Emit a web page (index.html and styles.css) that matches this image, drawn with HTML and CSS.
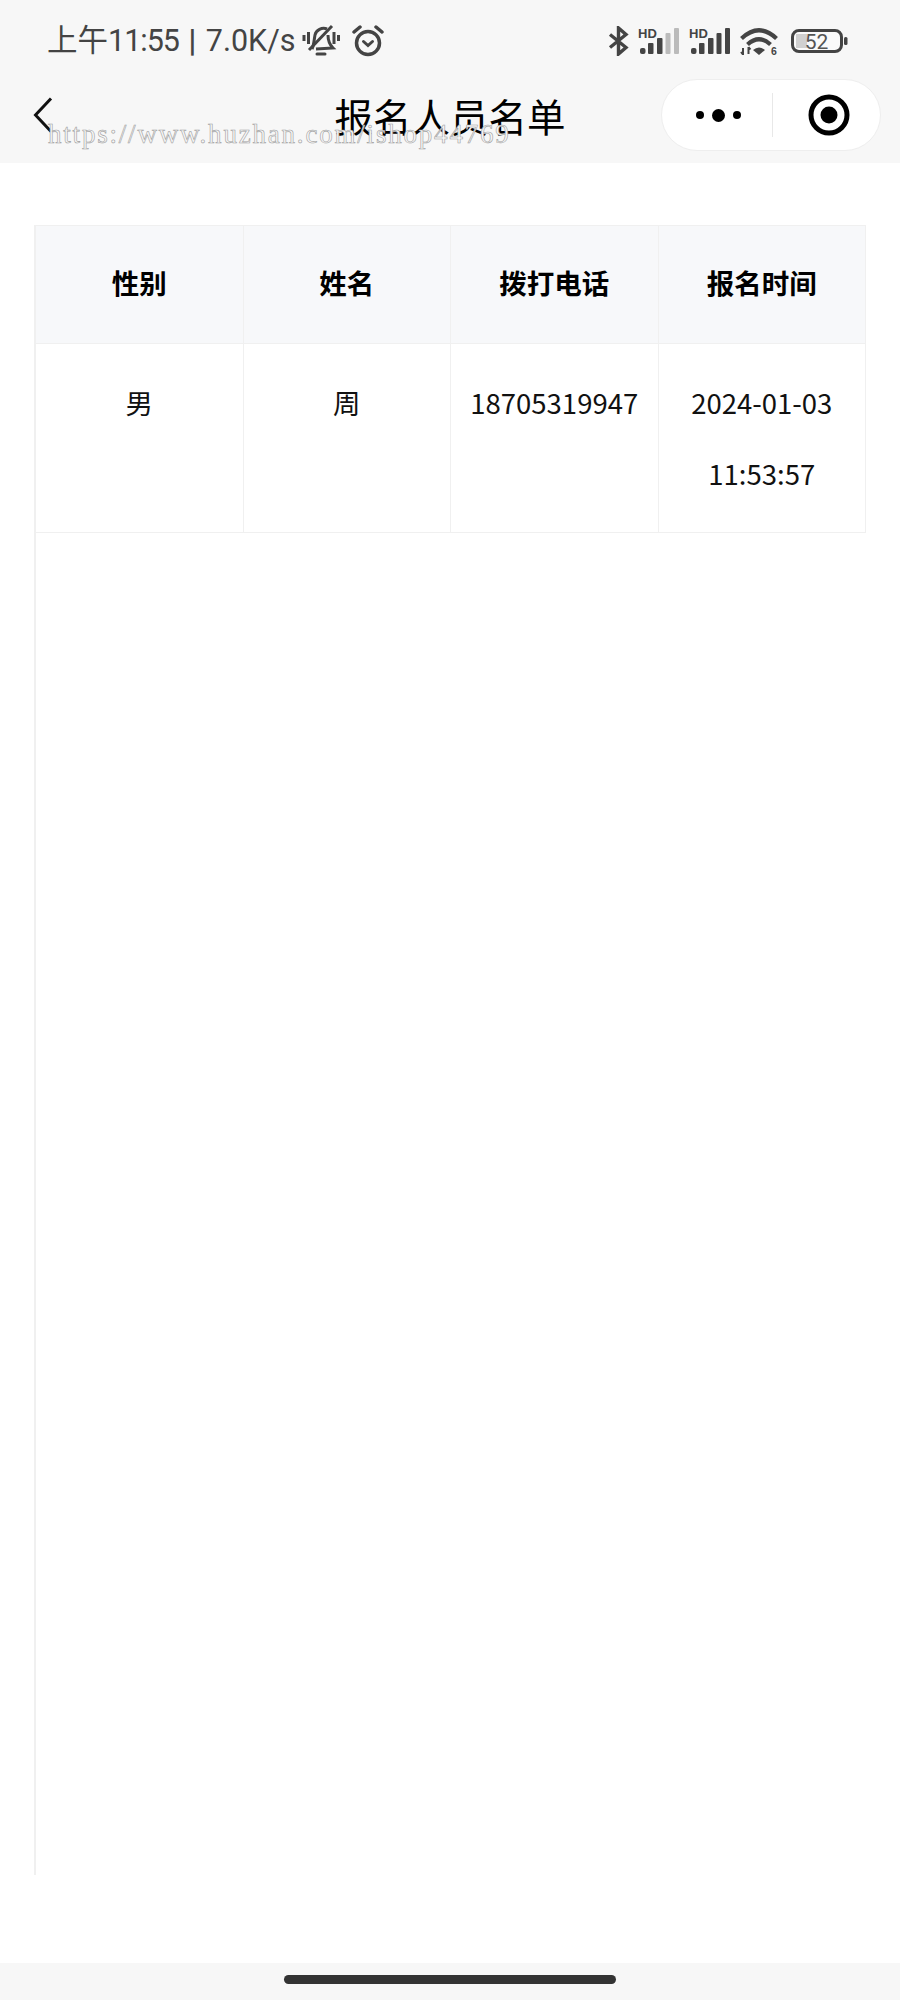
FILE: index.html
```html
<!DOCTYPE html>
<html lang="zh-CN">
<head>
<meta charset="utf-8">
<title>报名人员名单</title>
<link rel="stylesheet" href="styles.css">
</head>
<body>
<div class="page">
  <header class="top">
    <div class="status">
      <span class="clock">上午<span class="time">11:55</span> <b class="bar">|</b> 7.0K/s</span>
      <svg class="ic-bell" viewBox="0 0 38 34" fill="none" stroke="#444" stroke-width="3">
        <path d="M2 11v6M6.500 8v12M32 8v12M36.500 11v6"/>
        <path d="M10 25c2-4 2-9 3-14 1-5 7-8 12-6M26 11c0 5 1 9 5 13l-17 1"/>
        <path d="M15 30h8" stroke-linecap="round"/>
        <path d="M7 26 30 2"/>
      </svg>
      <svg class="ic-alarm" viewBox="0 0 32 32" fill="none" stroke="#444" stroke-width="3.500" stroke-linecap="round">
        <circle cx="16" cy="18" r="11.500"/>
        <path d="M2 7l6-5M24 2l6 5"/>
        <path d="M11.500 16.500 16 20.500l4.500-4" stroke-width="3"/>
      </svg>
      <div class="sys">
        <svg class="ic-bt" viewBox="0 0 21 30" fill="none" stroke="#444" stroke-width="3.400">
          <path d="M2 8.500 18 21.500 10.500 28V2L18 8.500 2 21.500"/>
        </svg>
        <svg class="ic-sig" viewBox="0 -3 42 29" fill="#444">
          <text x="0" y="10" class="hd">HD</text>
          <rect x="2" y="20" width="5.500" height="6" rx="2"/>
          <rect x="10" y="15" width="5.500" height="11" rx="1"/>
          <rect x="19" y="10" width="5.500" height="16" rx="1"/>
          <rect x="27.500" y="5" width="5" height="21" rx="1" fill="#bbb"/>
          <rect x="36" y="0" width="5" height="26" rx="1" fill="#bbb"/>
        </svg>
        <svg class="ic-sig" viewBox="0 -3 42 29" fill="#444">
          <text x="0" y="10" class="hd">HD</text>
          <rect x="2" y="20" width="5.500" height="6" rx="2"/>
          <rect x="10" y="15" width="5.500" height="11" rx="1"/>
          <rect x="19" y="10" width="5.500" height="16" rx="1"/>
          <rect x="27.500" y="5" width="5" height="21" rx="1"/>
          <rect x="36" y="0" width="5" height="26" rx="1"/>
        </svg>
        <svg class="ic-wifi" viewBox="0 0 38 28" fill="none" stroke="#444" stroke-width="4.200">
          <path d="M1.500 11.500Q19-5 36.500 11.500"/>
          <path d="M7.500 17.500Q19 7 30.500 17.500"/>
          <path d="M13 23Q19 18 25 23L19 28Z" fill="#444" stroke="none"/>
          <path d="M3 21v7M8.500 20v7M1 25l2 2.500M8.500 20l2 2.500" stroke-width="2"/>
          <text x="31" y="27.500" class="six">6</text>
        </svg>
        <svg class="ic-batt" viewBox="0 0 57 24">
          <rect x="1.500" y="1.500" width="49" height="21" rx="6.500" fill="#fafafa" stroke="#444" stroke-width="3"/>
          <rect x="5" y="5" width="11" height="14" fill="#d0d0d0"/>
          <text x="25.500" y="19.500" class="lvl">52</text>
          <rect x="53" y="8" width="3.500" height="8" rx="1.500" fill="#444"/>
        </svg>
      </div>
    </div>
    <nav class="nav">
      <svg class="back" viewBox="0 0 20 36" fill="none" stroke="#111" stroke-width="3"><path d="M18 1.500 2.500 18 18 34.500"/></svg>
      <h1 class="title">报名人员名单</h1>
      <div class="capsule">
        <span class="more">
          <i class="dot"></i><i class="dot big"></i><i class="dot"></i>
        </span>
        <span class="sep"></span>
        <svg class="target" viewBox="0 0 42 42"><circle cx="21" cy="21" r="18" fill="none" stroke="#000" stroke-width="5"/><circle cx="21" cy="21" r="8.500" fill="#000"/></svg>
      </div>
    </nav>
    <div class="watermark">https://www.huzhan.com/ishop44769</div>
  </header>
  <main class="content">
    <div class="sheet">
      <table class="list">
        <thead>
          <tr><th>性别</th><th>姓名</th><th>拨打电话</th><th>报名时间</th></tr>
        </thead>
        <tbody>
          <tr><td>男</td><td>周</td><td>18705319947</td><td>2024-01-03<br>11:53:57</td></tr>
        </tbody>
      </table>
    </div>
  </main>
  <footer class="home"><span class="pill"></span></footer>
</div>
</body>
</html>
```
FILE: styles.css
```css
* { box-sizing: border-box; }
html, body { margin: 0; padding: 0; background: #fff; }
body { font-family: "Noto Sans CJK SC", "Noto Sans", sans-serif; }
.page { width: 900px; height: 2000px; display: flex; flex-direction: column; overflow: hidden; }

.top { position: relative; height: 163px; background: #f7f7f7; flex: none; }
.status { height: 79px; display: flex; align-items: center; padding: 0 52px 0 47px; }
.clock { font-family: Roboto, "Noto Sans CJK SC", sans-serif; font-size: 30.500px; line-height: 36px; margin-top: 3px; color: #444; white-space: nowrap; width: 255px; word-spacing: 2px; }
.time { letter-spacing: -1px; }
.bar { font-weight: 700; }
.ic-bell { width: 38px; height: 34px; margin-top: 2px; }
.ic-alarm { width: 32px; height: 32px; margin-left: 12px; margin-top: 2px; }
.sys { margin-left: auto; display: flex; align-items: center; gap: 9px; margin-top: 3px; }
.ic-bt { width: 21px; height: 30px; }
.ic-sig { width: 42px; height: 29px; margin-top: -3px; }
.ic-wifi { width: 38px; height: 28px; }
.ic-batt { width: 57px; height: 24px; margin-left: 4px; }
.hd { font-family: "Liberation Sans", sans-serif; font-weight: 700; font-size: 13px; }
.six { font-family: "Liberation Sans", sans-serif; font-weight: 700; font-size: 10.500px; fill: #444; stroke: none; }
.lvl { font-family: Roboto, sans-serif; font-size: 21px; fill: #555; text-anchor: middle; }

.nav { height: 72px; display: grid; grid-template-columns: 1fr auto 1fr; align-items: center; }
.back { width: 20px; height: 36px; margin-left: 33px; }
.title { margin: 0; font-weight: 400; font-size: 38.500px; line-height: 72px; color: #000; white-space: nowrap; }
.capsule { justify-self: end; margin-right: 19px; width: 220px; height: 72px; background: #fff; border: 1px solid #eee; border-radius: 36px; display: flex; align-items: center; padding-left: 34px; }
.more { display: flex; align-items: center; gap: 8px; width: 76px; }
.dot { width: 8px; height: 8px; border-radius: 50%; background: #000; }
.dot.big { width: 13px; height: 13px; }
.sep { width: 1px; height: 44px; background: #e8e8e8; }
.target { width: 42px; height: 42px; margin-left: 35px; }

.watermark { position: absolute; left: 48px; top: 118px; font-family: "Liberation Serif", serif; font-size: 27px; line-height: 32px; letter-spacing: 1.800px; color: #f8f8f8; -webkit-text-stroke: 0.600px #a0a0a0; white-space: nowrap; }

.content { flex: 1; padding: 62px 34px 88px 35px; }
.sheet { height: 100%; border-left: 2px solid #f0f0f0; margin-left: -1px; }
.list { width: 831px; margin-left: -1px; border-collapse: collapse; table-layout: fixed; color: #111; }
.list th, .list td { border: 1px solid #f0f0f0; text-align: center; }
.list th { height: 118px; background: #f7f8fa; font-size: 27.500px; font-weight: 700; color: #000; padding: 0 0 5px; }
.list td { font-size: 27.500px; line-height: 71px; vertical-align: top; padding: 23px 0; height: 188px; }

.home { flex: none; height: 37px; background: #f7f7f7; display: flex; justify-content: center; padding-top: 12px; }
.pill { width: 332px; height: 9px; border-radius: 5px; background: #333; }
```
